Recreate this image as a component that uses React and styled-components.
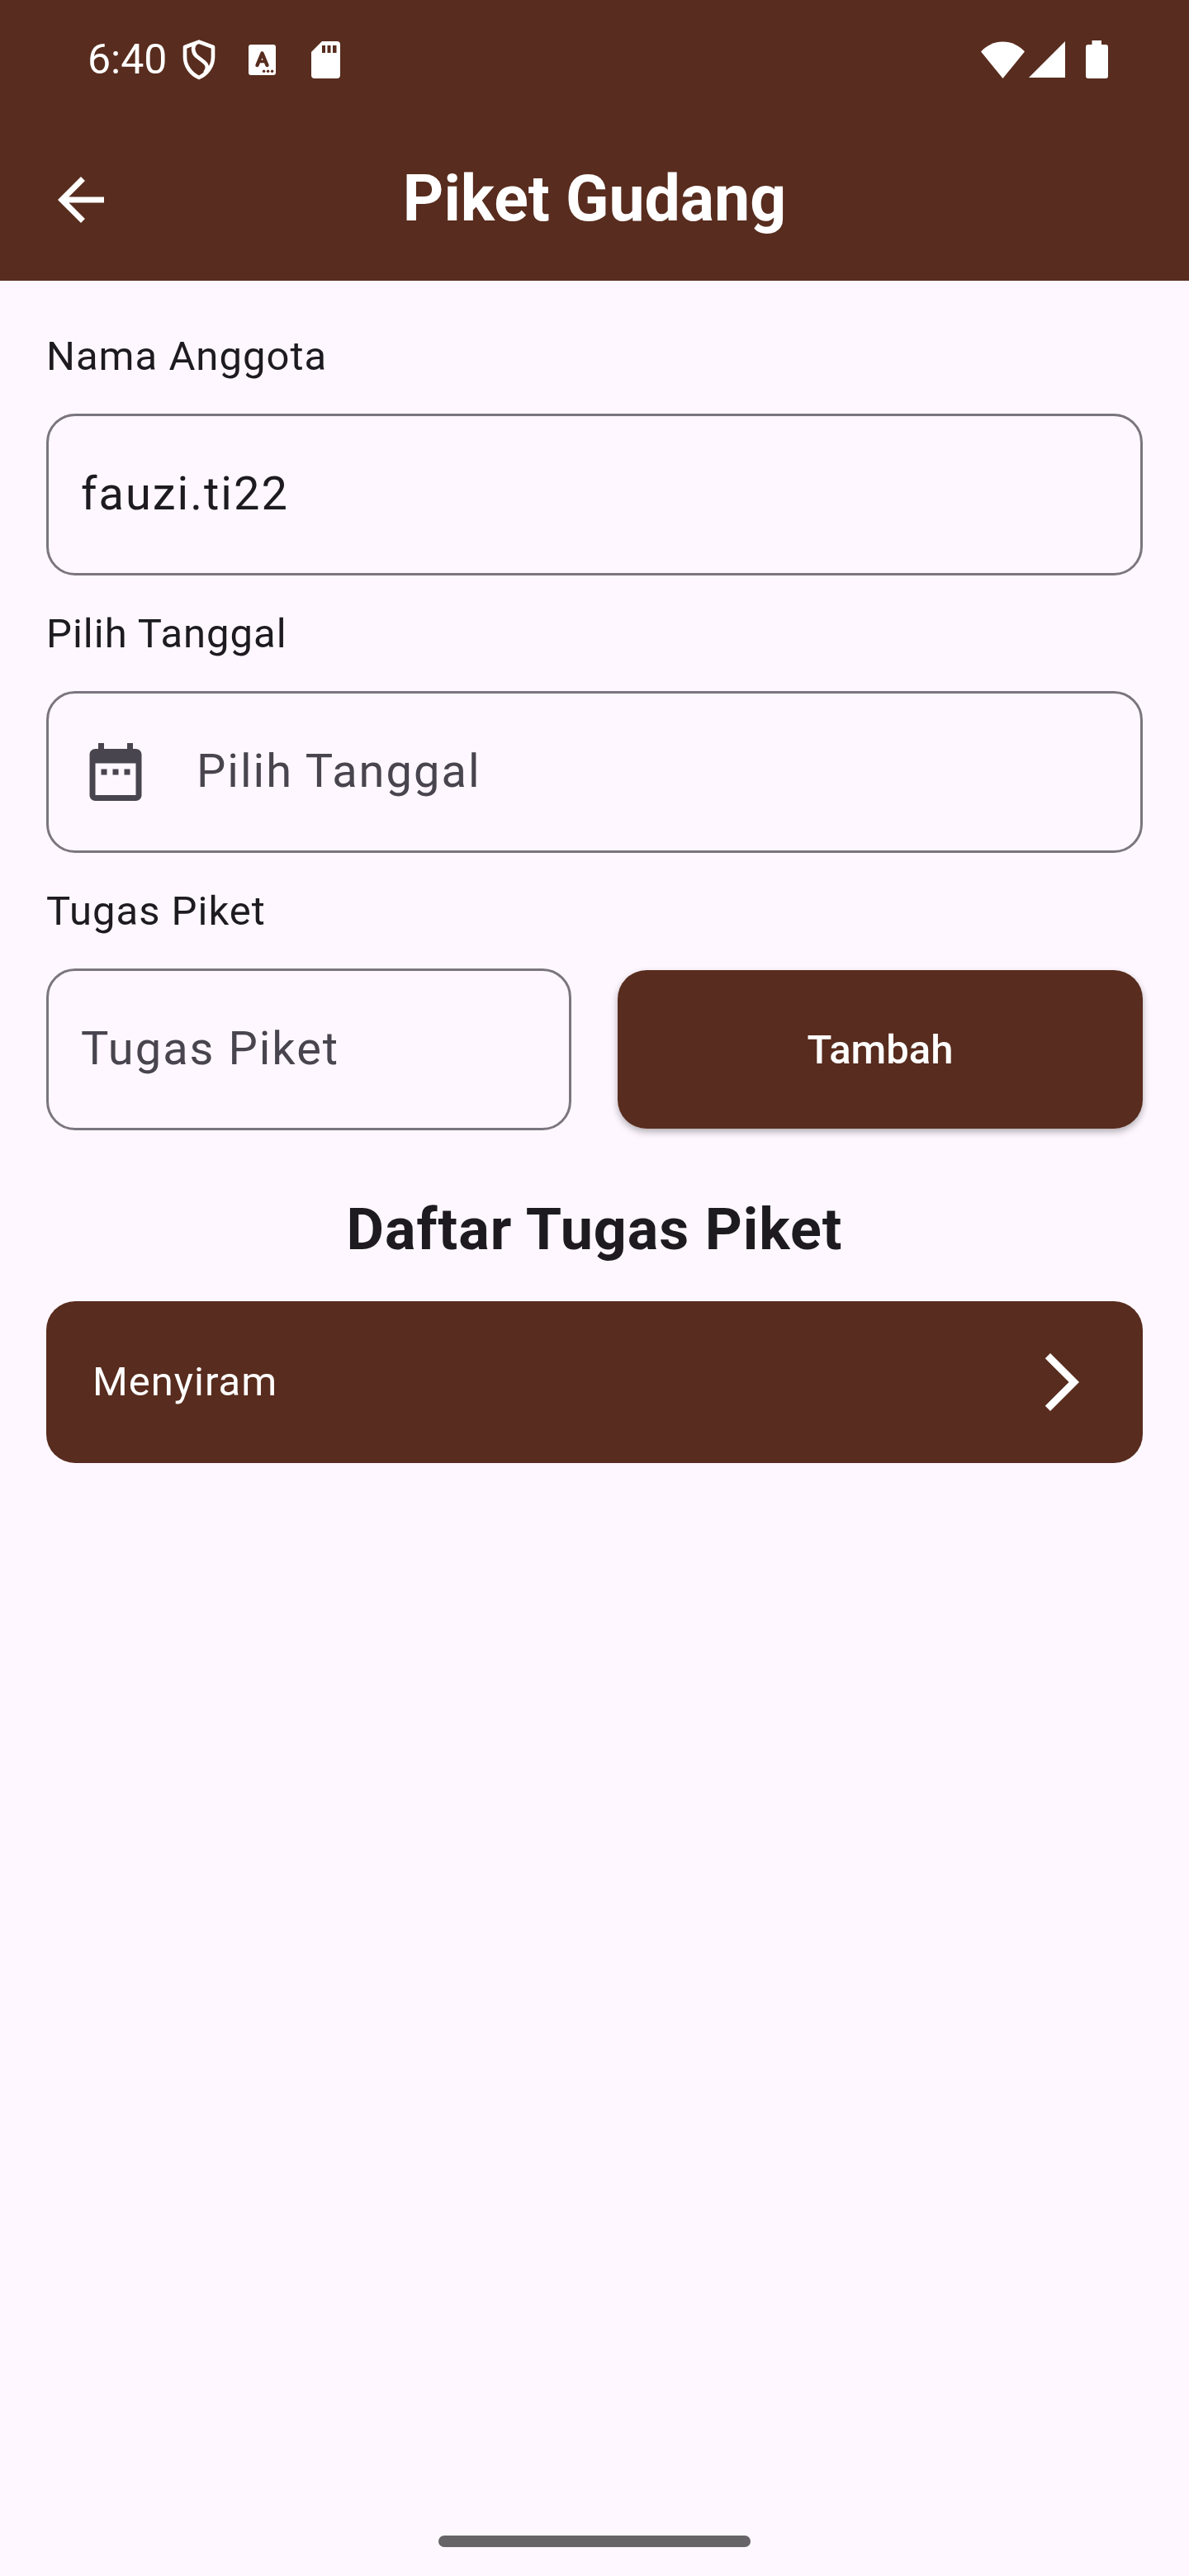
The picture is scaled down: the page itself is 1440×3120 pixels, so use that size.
import React, { useState } from "react";
import styled, { createGlobalStyle } from "styled-components";

const colors = {
  brown: "#582c1e",
  surface: "#fef7ff",
  ink: "#1d1b20",
  muted: "#49454f",
  outline: "#7b757f",
  handle: "#666467",
  white: "#ffffff",
};

const GlobalStyle = createGlobalStyle`
  *, *::before, *::after { box-sizing: border-box; }
  body {
    margin: 0;
    background: ${colors.surface};
    color: ${colors.ink};
    font-family: Roboto, "Liberation Sans", sans-serif;
  }
  button, input { font-family: inherit; }
`;

const Screen = styled.div`
  display: flex;
  flex-direction: column;
  min-height: 100vh;
`;

const TopArea = styled.header`
  background: ${colors.brown};
  color: ${colors.white};
`;

const StatusBar = styled.div`
  display: flex;
  align-items: center;
  justify-content: space-between;
  height: 144px;
  padding: 0 98px 0 106px;
`;

const StatusGroup = styled.div`
  display: flex;
  align-items: center;
`;

const Clock = styled.time`
  font-size: 50px;
  line-height: 56px;
`;

const StatusSlot = styled.span`
  display: flex;
  justify-content: center;
  width: 77px;
`;

const Glyph = styled.svg`
  display: block;
  flex: none;
  fill: currentColor;
  margin-right: ${(p) => p.$gap || 0}px;
`;

const AppBar = styled.div`
  display: grid;
  grid-template-columns: 84px 1fr 84px;
  align-items: center;
  height: 196px;
  padding: 0 56px;
`;

const IconButton = styled.button`
  display: flex;
  padding: 0;
  border: 0;
  background: none;
  color: inherit;
  cursor: pointer;
`;

const Title = styled.h1`
  margin: 0;
  padding-bottom: 2px;
  font-size: 77px;
  font-weight: 700;
  line-height: 98px;
  text-align: center;
`;

const Content = styled.main`
  padding: 56px;
`;

const Form = styled.form`
  display: flex;
  flex-direction: column;
  gap: 35px;
`;

const FieldGroup = styled.div`
  display: flex;
  flex-direction: column;
  gap: 33px;
`;

const Label = styled.label`
  font-size: 49px;
  line-height: 72px;
  letter-spacing: 1px;
`;

const Field = styled.div`
  display: flex;
  align-items: center;
  gap: 56px;
  height: 196px;
  min-width: 0;
  padding: 0 39px;
  border: 3px solid ${colors.outline};
  border-radius: 35px;
  color: ${colors.muted};
`;

const TextInput = styled.input`
  flex: 1;
  min-width: 0;
  padding: 0 0 2px;
  border: 0;
  outline: 0;
  background: transparent;
  color: ${colors.ink};
  font-size: 56px;
  line-height: 84px;
  letter-spacing: 2px;

  &::placeholder {
    color: ${colors.muted};
    opacity: 1;
  }
`;

const AddRow = styled.div`
  display: grid;
  grid-template-columns: 1fr 1fr;
  align-items: center;
  gap: 56px;
`;

const AddButton = styled.button`
  height: 192px;
  padding: 2px 0 0;
  border: 0;
  border-radius: 35px;
  background: ${colors.brown};
  color: ${colors.white};
  font-size: 49px;
  font-weight: 500;
  line-height: 70px;
  box-shadow: 0 4px 8px rgba(0, 0, 0, 0.3);
  cursor: pointer;
`;

const ListTitle = styled.h2`
  margin: 70px 0 37px;
  font-size: 70px;
  font-weight: 700;
  line-height: 100px;
  letter-spacing: 1px;
  text-align: center;
`;

const TaskList = styled.ul`
  display: flex;
  flex-direction: column;
  gap: 35px;
  margin: 0;
  padding: 0;
  list-style: none;
`;

const TaskButton = styled.button`
  display: flex;
  align-items: center;
  justify-content: space-between;
  width: 100%;
  height: 196px;
  padding: 0 56px;
  border: 0;
  border-radius: 35px;
  background: ${colors.brown};
  color: ${colors.white};
  font-size: 49px;
  line-height: 70px;
  letter-spacing: 1px;
  cursor: pointer;
`;

const NavArea = styled.footer`
  display: flex;
  justify-content: center;
  margin-top: auto;
  padding-bottom: 35px;
`;

const NavHandle = styled.div`
  width: 378px;
  height: 14px;
  border-radius: 7px;
  background: ${colors.handle};
`;

const MaterialIcon = ({ d }) => (
  <Glyph width="84" height="84" viewBox="0 0 24 24" aria-hidden="true">
    <path d={d} />
  </Glyph>
);

const ARROW_BACK = "M20 11H7.83l5.59-5.59L12 4l-8 8 8 8 1.41-1.41L7.83 13H20v-2z";
const DATE_RANGE =
  "M9 11H7v2h2v-2zm4 0h-2v2h2v-2zm4 0h-2v2h2v-2zm2-7h-1V2h-2v2H8V2H6v2H5c-1.11 0-1.99.9-1.99 2L3 20c0 1.1.89 2 2 2h14c1.1 0 2-.9 2-2V6c0-1.1-.9-2-2-2zm0 16H5V9h14v11z";
const FORWARD = "M6.23 20.23L8 22l10-10L8 2 6.23 3.77 14.46 12z";

const ShieldIcon = () => (
  <Glyph width="40" height="49" viewBox="0 0 40 49" aria-hidden="true">
    <g fill="none" stroke="currentColor" strokeWidth="4.6" strokeLinejoin="round">
      <path d="M20 2.6 L37 9 V21 C37 32 30 41.5 20 46 C10 41.5 3 32 3 21 V9 Z" />
      <path d="M16 4.5 C11.5 8 12.5 16 17 20 L26 27 C31 31 31 35 27 40.5" />
    </g>
  </Glyph>
);

const KeyboardIcon = () => (
  <Glyph width="33" height="37" viewBox="0 0 33 37" aria-hidden="true">
    <rect width="33" height="37" rx="3" />
    <g fill="none" stroke={colors.brown} strokeWidth="4.4" strokeLinecap="round" strokeLinejoin="round">
      <path d="M10.5 25 L16.5 10.5 L22.5 25" />
      <path d="M12.5 20.5 H20.5" strokeWidth="3.4" />
    </g>
    <g fill={colors.brown}>
      <circle cx="18.6" cy="32.3" r="1.7" />
      <circle cx="23.6" cy="32.3" r="1.7" />
      <circle cx="28.6" cy="32.3" r="1.7" />
    </g>
  </Glyph>
);

const SdCardIcon = () => (
  <Glyph width="35" height="45" viewBox="0 0 35 45" aria-hidden="true">
    <path d="M13 0 H31 a4 4 0 0 1 4 4 V41 a4 4 0 0 1 -4 4 H4 a4 4 0 0 1 -4 -4 V13 Z" />
    <path fill={colors.brown} d="M13 5h4v9h-4z M19.5 5h4v9h-4z M26 5h4.5v9h-4.5z" />
  </Glyph>
);

const WifiIcon = () => (
  <Glyph $gap={5} width="53" height="45" viewBox="0 0 53 45" aria-hidden="true">
    <path d="M26.5 45 L0 12.5 C7 5 16 0.5 26.5 0.5 C37 0.5 46 5 53 12.5 Z" />
  </Glyph>
);

const SignalIcon = () => (
  <Glyph $gap={25} width="44" height="44" viewBox="0 0 44 44" aria-hidden="true">
    <path d="M44 0 V44 H0 Z" />
  </Glyph>
);

const BatteryIcon = () => (
  <Glyph width="27" height="46" viewBox="0 0 27 46" aria-hidden="true">
    <path d="M7.5 0 H19 V5 H24 a3 3 0 0 1 3 3 V43 a3 3 0 0 1 -3 3 H3 a3 3 0 0 1 -3 -3 V8 a3 3 0 0 1 3 -3 H7.5 Z" />
  </Glyph>
);

export default function App() {
  const [name, setName] = useState("fauzi.ti22");
  const [task, setTask] = useState("");
  const [tasks, setTasks] = useState(["Menyiram"]);

  const addTask = (event) => {
    event.preventDefault();
    if (!task.trim()) return;
    setTasks([...tasks, task.trim()]);
    setTask("");
  };

  return (
    <Screen>
      <GlobalStyle />
      <TopArea>
        <StatusBar>
          <StatusGroup>
            <Clock>6:40</Clock>
            <StatusSlot><ShieldIcon /></StatusSlot>
            <StatusSlot><KeyboardIcon /></StatusSlot>
            <StatusSlot><SdCardIcon /></StatusSlot>
          </StatusGroup>
          <StatusGroup>
            <WifiIcon />
            <SignalIcon />
            <BatteryIcon />
          </StatusGroup>
        </StatusBar>
        <AppBar>
          <IconButton type="button" aria-label="Kembali">
            <MaterialIcon d={ARROW_BACK} />
          </IconButton>
          <Title>Piket Gudang</Title>
        </AppBar>
      </TopArea>

      <Content>
        <Form onSubmit={addTask}>
          <FieldGroup>
            <Label htmlFor="nama">Nama Anggota</Label>
            <Field>
              <TextInput id="nama" value={name} onChange={(e) => setName(e.target.value)} />
            </Field>
          </FieldGroup>
          <FieldGroup>
            <Label htmlFor="tanggal">Pilih Tanggal</Label>
            <Field>
              <MaterialIcon d={DATE_RANGE} />
              <TextInput id="tanggal" placeholder="Pilih Tanggal" readOnly />
            </Field>
          </FieldGroup>
          <FieldGroup>
            <Label htmlFor="tugas">Tugas Piket</Label>
            <AddRow>
              <Field>
                <TextInput
                  id="tugas"
                  placeholder="Tugas Piket"
                  value={task}
                  onChange={(e) => setTask(e.target.value)}
                />
              </Field>
              <AddButton type="submit">Tambah</AddButton>
            </AddRow>
          </FieldGroup>
        </Form>

        <ListTitle>Daftar Tugas Piket</ListTitle>
        <TaskList>
          {tasks.map((item, index) => (
            <li key={index}>
              <TaskButton type="button">
                {item}
                <MaterialIcon d={FORWARD} />
              </TaskButton>
            </li>
          ))}
        </TaskList>
      </Content>

      <NavArea>
        <NavHandle />
      </NavArea>
    </Screen>
  );
}
